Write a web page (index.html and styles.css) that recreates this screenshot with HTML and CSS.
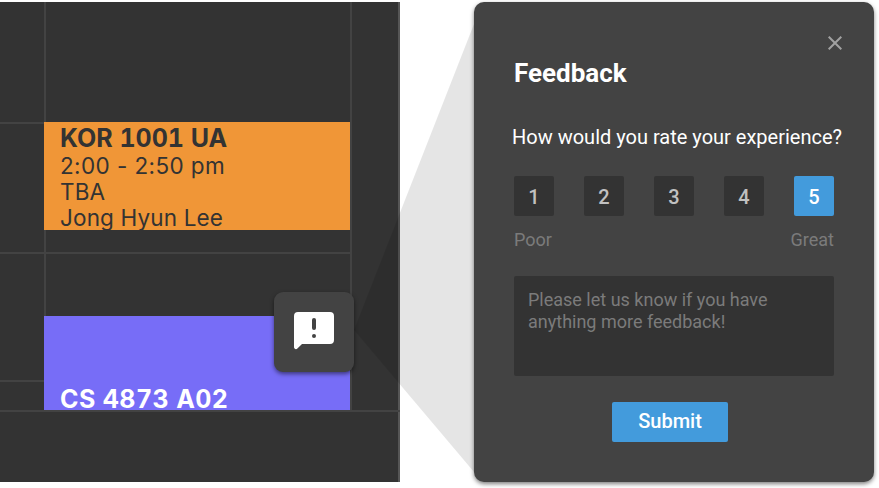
FILE: index.html
```html
<!DOCTYPE html>
<html lang="en">
<head>
<meta charset="utf-8">
<title>Feedback</title>
<link rel="stylesheet" href="styles.css">
</head>
<body>
<main class="stage">
  <section class="schedule">
    <div class="week">
      <div class="times"><div class="slot first"></div><div class="slot second"></div><div class="slot third"></div></div>
      <div class="day">
        <article class="event orange">
          <h2>KOR 1001 UA</h2>
          <p class="hours">2:00 - 2:50 pm</p>
          <p>TBA</p>
          <p>Jong Hyun Lee</p>
        </article>
        <div class="rule"></div>
        <article class="event purple"><h2>CS 4873 A02</h2></article>
      </div>
    </div>
  </section>
  <svg class="beam" viewBox="0 0 120 448" aria-hidden="true"><path d="M0 306 120 0V448Z"/></svg>
  <button class="launcher" aria-label="Feedback">
    <svg viewBox="0 0 40 40"><path class="bubble" d="M4 0H36Q40 0 40 4V28Q40 32 36 32H8L3.4 36.6C2.1 37.9 0 37 0 35V4Q0 0 4 0Z"/><rect class="mark" x="18" y="6" width="4" height="12" rx="2"/><circle class="mark" cx="20" cy="24" r="2"/></svg>
  </button>
  <section class="dialog">
    <button class="close" aria-label="Close"><svg viewBox="0 0 14 14"><path d="M.7.7 13.3 13.3M13.3.7.7 13.3"/></svg></button>
    <h1>Feedback</h1>
    <p class="question">How would you rate your experience?</p>
    <div class="ratings">
      <button>1</button><button>2</button><button>3</button><button>4</button><button class="selected">5</button>
    </div>
    <div class="scale"><span>Poor</span><span>Great</span></div>
    <div class="comment">Please let us know if you have anything more feedback!</div>
    <button class="submit">Submit</button>
  </section>
</main>
</body>
</html>
```
FILE: styles.css
```css
* { box-sizing: border-box; }
body { margin: 0; background: #fff; font-family: Roboto, sans-serif; overflow: hidden; }
h1, h2, p { margin: 0; }
button { border: 0; padding: 0; font: inherit; }
svg { display: block; }
.stage { position: relative; display: flex; gap: 74px; width: 879px; height: 488px; padding-top: 2px; overflow: hidden; }
.schedule { width: 400px; height: 480px; background: #333; border-right: 2px solid #565656; font-family: Inter, sans-serif; flex: none; }
.week { display: flex; width: 400px; height: 410px; border-bottom: 2px solid #434343; }
.times { width: 44px; }
.slot { border-bottom: 2px solid #434343; }
.first { height: 122px; }
.second { height: 130px; }
.third { height: 128px; }
.day { width: 308px; height: 408px; padding-top: 120px; border-left: 2px solid #434343; border-right: 2px solid #434343; }
.event { width: 306px; margin-left: -2px; padding-left: 16px; overflow: hidden; font-size: 22.5px; line-height: 26px; letter-spacing: .15px; white-space: nowrap; }
.event h2 { font-size: 25px; line-height: 30px; font-weight: 700; letter-spacing: 0; font-variant-numeric: tabular-nums; }
.event .hours { letter-spacing: .4px; }
.orange { height: 108px; padding-top: 1px; background: #f09637; color: #333; }
.purple { height: 94px; margin-top: 62px; padding-top: 68px; background: #776df7; color: #fff; }
.purple h2 { letter-spacing: .4px; }
.rule { height: 2px; margin-top: 22px; margin-left: -2px; background: #434343; }
.beam { position: absolute; left: 354px; top: 24px; width: 120px; height: 448px; }
.beam path { fill: #000; fill-opacity: .1; }
.launcher { position: absolute; left: 274px; top: 292px; width: 80px; height: 80px; border-radius: 9px; background: #434343; padding: 20px; box-shadow: 0 2px 4px rgba(0,0,0,.5); }
.launcher svg { width: 40px; height: 40px; }
.bubble { fill: #fff; }
.mark { fill: #434343; }
.dialog { position: relative; display: flex; flex-direction: column; width: 400px; height: 480px; padding: 56px 40px 0; border-radius: 10px; background: #434343; color: #fff; box-shadow: 0 2px 4px rgba(0,0,0,.5); flex: none; }
.close { position: absolute; top: 34px; right: 32px; width: 14px; height: 14px; background: none; }
.close path { fill: none; stroke: #a1a1a1; stroke-width: 2; }
h1 { font-size: 26px; line-height: 30px; font-weight: 700; }
.question { margin: 37px 0 0 -2px; font-size: 20px; line-height: 24px; white-space: nowrap; }
.ratings { display: flex; justify-content: space-between; margin-top: 27px; }
.ratings button { width: 40px; height: 40px; border-radius: 2px; background: #333; color: #c1c1c1; font-size: 20px; font-weight: 500; line-height: 42px; }
.ratings .selected { background: #439bdc; color: #fff; }
.scale { display: flex; justify-content: space-between; margin-top: 13px; font-size: 18px; line-height: 22px; color: #7b7b7b; }
.comment { height: 100px; margin-top: 25px; padding: 13px 50px 0 14px; border-radius: 2px; background: #333; color: #7b7b7b; font-size: 18px; line-height: 22px; }
.submit { align-self: flex-start; width: 116px; height: 40px; margin: 26px 0 0 98px; padding-bottom: 2px; border-radius: 2px; background: #439bdc; color: #fff; font-size: 20px; font-weight: 500; line-height: 38px; }
```
